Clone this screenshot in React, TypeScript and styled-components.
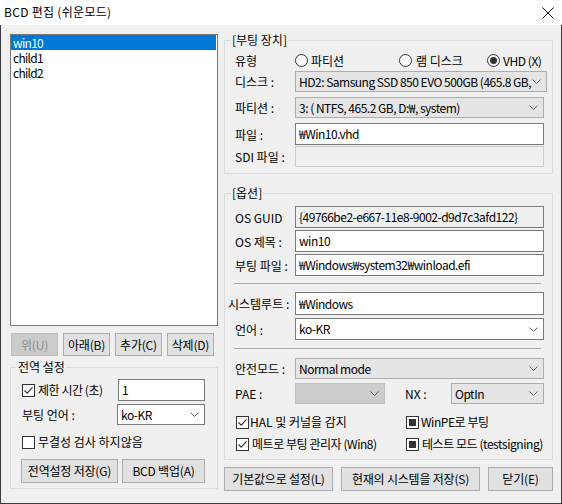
import React from 'react';
import styled, { createGlobalStyle } from 'styled-components';

const FONT = `"Noto Sans CJK KR", "Malgun Gothic", "Noto Sans", sans-serif`;

const GlobalStyle = createGlobalStyle`
  html, body { margin: 0; padding: 0; background: #ffffff; }
  body { font-family: ${FONT}; font-size: 12px; color: #000; }
  *, *::before, *::after { box-sizing: border-box; }
`;

const Window = styled.div`
  width: 562px;
  height: 504px;
  display: flex;
  flex-direction: column;
  background: #f0f0f0;
  overflow: hidden;
`;

const TitleBar = styled.div`
  flex: none;
  height: 25px;
  display: flex;
  align-items: center;
  justify-content: space-between;
  background: #ffffff;
  padding-left: 4px;
`;

const TitleText = styled.span`
  line-height: 16px;
  margin-top: -1px;
  letter-spacing: 0.3px;
`;

const CloseBox = styled.div`
  width: 28px;
  height: 25px;
  display: flex;
  align-items: center;
  justify-content: center;
`;

const Body = styled.div`
  flex: 1;
  min-height: 0;
  display: flex;
  gap: 6px;
  padding: 9px 8px 0 9px;
  border: 1px solid #3c3c3c;
  border-top: none;
`;

const LeftColumn = styled.div`
  width: 208px;
  flex: none;
  display: flex;
  flex-direction: column;
`;

const RightColumn = styled.div`
  width: 329px;
  flex: none;
  display: flex;
  flex-direction: column;
`;

const ListBox = styled.div`
  height: 292px;
  flex: none;
  border: 1px solid #7a7a7a;
  background: #ffffff;
  padding: 0 1px 0 0;
  display: flex;
  flex-direction: column;
`;

const ListItem = styled.div<{ $selected?: boolean }>`
  height: 15px;
  display: flex;
  align-items: center;
  line-height: 14px;
  padding-left: 2px;
  letter-spacing: -0.7px;
  background: ${(p) => (p.$selected ? '#0078d7' : 'transparent')};
  color: ${(p) => (p.$selected ? '#ffffff' : '#000000')};
  white-space: nowrap;
`;

const ButtonRow = styled.div<{ $mt: number; $gap: number; $ml?: number; $between?: boolean }>`
  display: flex;
  gap: ${(p) => p.$gap}px;
  margin-top: ${(p) => p.$mt}px;
  margin-left: ${(p) => p.$ml ?? 0}px;
  justify-content: ${(p) => (p.$between ? 'space-between' : 'flex-start')};
  flex: none;
`;

const Button = styled.button<{ $w: number; $h: number }>`
  width: ${(p) => p.$w}px;
  height: ${(p) => p.$h}px;
  padding: 0;
  margin: 0;
  border: 1px solid #adadad;
  background: #e1e1e1;
  color: #000000;
  font-family: ${FONT};
  font-size: 12px;
  line-height: 14px;
  letter-spacing: -0.2px;
  white-space: nowrap;
  &:disabled {
    background: #cccccc;
    border-color: #bfbfbf;
    color: #8c8c8c;
  }
`;

const Group = styled.div<{ $mt: number; $pl: number; $pr: number; $pb: number }>`
  position: relative;
  flex: none;
  margin-top: ${(p) => p.$mt}px;
  border: 1px solid #dcdcdc;
  padding: 0 ${(p) => p.$pr}px ${(p) => p.$pb}px ${(p) => p.$pl}px;
  display: flex;
  flex-direction: column;
`;

const GroupLabel = styled.span`
  position: absolute;
  top: -8px;
  left: 6px;
  padding: 0 1px;
  line-height: 14px;
  background: #f0f0f0;
  white-space: nowrap;
`;

const FieldRow = styled.div<{ $h: number; $mt: number; $labelW?: number }>`
  display: grid;
  grid-template-columns: ${(p) => p.$labelW ?? 60}px 1fr;
  align-items: stretch;
  height: ${(p) => p.$h}px;
  margin-top: ${(p) => p.$mt}px;
  flex: none;
`;

const Label = styled.span<{ $shift?: number }>`
  display: flex;
  align-items: center;
  margin-left: ${(p) => p.$shift ?? 0}px;
  white-space: nowrap;
  line-height: 14px;
  padding-top: 1px;
`;

type Tone = 'white' | 'readonly' | 'disabled';

const TextBox = styled.div<{ $tone?: Tone }>`
  display: flex;
  align-items: center;
  padding-left: 3px;
  border: 1px solid ${(p) => (p.$tone === 'disabled' ? '#cccccc' : '#7a7a7a')};
  background: ${(p) => (p.$tone === 'white' || !p.$tone ? '#ffffff' : '#f0f0f0')};
  white-space: nowrap;
  line-height: 14px;
  letter-spacing: -0.5px;
`;

const Combo = styled.div<{ $tone: 'white' | 'gray' | 'disabled' }>`
  display: flex;
  align-items: center;
  padding: 0 4px 0 2px;
  border: 1px solid
    ${(p) => (p.$tone === 'white' ? '#7a7a7a' : p.$tone === 'disabled' ? '#bfbfbf' : '#adadad')};
  background: ${(p) => (p.$tone === 'white' ? '#ffffff' : p.$tone === 'disabled' ? '#cccccc' : '#e5e5e5')};
  white-space: nowrap;
  line-height: 14px;
`;

const ComboText = styled.span`
  flex: 1;
  min-width: 0;
  padding-left: 1px;
  letter-spacing: -0.5px;
`;

const ChevronBox = styled.span`
  flex: none;
  width: 11px;
  display: flex;
  justify-content: center;
`;

const Separator = styled.div<{ $mt: number }>`
  height: 1px;
  flex: none;
  margin: ${(p) => p.$mt}px 3px 0 -1px;
  background: #a9a9a9;
`;

const RadioRow = styled.div`
  display: grid;
  grid-template-columns: 104px 88px auto;
  align-items: center;
`;

const Choice = styled.span<{ $gap: number; $tight?: boolean }>`
  display: flex;
  align-items: center;
  gap: ${(p) => p.$gap}px;
  white-space: nowrap;
  line-height: 14px;
  letter-spacing: ${(p) => (p.$tight ? '-0.45px' : '0')};
`;

const CheckRow = styled.div<{ $mt: number; $cols?: string; $ml?: number }>`
  display: grid;
  grid-template-columns: ${(p) => p.$cols ?? '1fr'};
  align-items: center;
  height: 14px;
  margin-top: ${(p) => p.$mt}px;
  margin-left: ${(p) => p.$ml ?? 0}px;
  flex: none;
`;

const Chevron = () => (
  <ChevronBox>
    <svg width="9" height="5" viewBox="0 0 9 5">
      <polyline points="0.5,0.5 4.5,4.5 8.5,0.5" fill="none" stroke="#606060" strokeWidth="1" />
    </svg>
  </ChevronBox>
);

const Radio = ({ checked }: { checked?: boolean }) => (
  <svg width="13" height="13" viewBox="0 0 13 13">
    <circle cx="6.5" cy="6.5" r="6" fill="#ffffff" stroke="#333333" strokeWidth="1" />
    {checked && <circle cx="6.5" cy="6.5" r="3.5" fill="#333333" />}
  </svg>
);

const CheckBox = ({ state }: { state: 'on' | 'off' | 'mixed' }) => (
  <svg width="13" height="13" viewBox="0 0 13 13">
    <rect x="0.5" y="0.5" width="12" height="12" fill="#ffffff" stroke="#333333" strokeWidth="1" />
    {state === 'on' && (
      <polyline points="2.5,6.5 5.2,9.2 10.5,3.3" fill="none" stroke="#333333" strokeWidth="1.2" />
    )}
    {state === 'mixed' && <rect x="3" y="3" width="7" height="7" fill="#333333" />}
  </svg>
);

const DropDown = ({ tone, text }: { tone: 'white' | 'gray' | 'disabled'; text: string }) => (
  <Combo $tone={tone}>
    <ComboText>{text}</ComboText>
    <Chevron />
  </Combo>
);

export default function App() {
  return (
    <>
      <GlobalStyle />
      <Window>
        <TitleBar>
          <TitleText>BCD 편집 (쉬운모드)</TitleText>
          <CloseBox>
            <svg width="12" height="12" viewBox="0 0 12 12">
              <path d="M0.5 0.5 L11.5 11.5 M11.5 0.5 L0.5 11.5" stroke="#111111" strokeWidth="1" />
            </svg>
          </CloseBox>
        </TitleBar>
        <Body>
          <LeftColumn>
            <ListBox>
              <ListItem $selected>win10</ListItem>
              <ListItem>child1</ListItem>
              <ListItem>child2</ListItem>
            </ListBox>
            <ButtonRow $mt={7} $gap={5} $ml={1}>
              <Button $w={47} $h={23} disabled>
                위(U)
              </Button>
              <Button $w={47} $h={23}>아래(B)</Button>
              <Button $w={47} $h={23}>추가(C)</Button>
              <Button $w={47} $h={23}>삭제(D)</Button>
            </ButtonRow>
            <Group $mt={11} $pl={11} $pr={12} $pb={5}>
              <GroupLabel>전역 설정</GroupLabel>
              <FieldRow $h={22} $mt={11} $labelW={96}>
                <Choice $gap={3} $tight>
                  <CheckBox state="on" />
                  제한 시간 (초)
                </Choice>
                <TextBox $tone="white">1</TextBox>
              </FieldRow>
              <FieldRow $h={21} $mt={3} $labelW={95}>
                <Label>부팅 언어 :</Label>
                <DropDown tone="white" text="ko-KR" />
              </FieldRow>
              <CheckRow $mt={10}>
                <Choice $gap={3}>
                  <CheckBox state="off" />
                  무결성 검사 하지않음
                </Choice>
              </CheckRow>
              <ButtonRow $mt={10} $gap={4} $ml={-1}>
                <Button $w={97} $h={24}>전역설정 저장(G)</Button>
                <Button $w={83} $h={24}>BCD 백업(A)</Button>
              </ButtonRow>
            </Group>
          </LeftColumn>

          <RightColumn>
            <Group $mt={6} $pl={10} $pr={8} $pb={6}>
              <GroupLabel>[부팅 장치]</GroupLabel>
              <FieldRow $h={14} $mt={12}>
                <Label>유형</Label>
                <RadioRow>
                  <Choice $gap={3}>
                    <Radio />
                    파티션
                  </Choice>
                  <Choice $gap={4}>
                    <Radio />
                    램 디스크
                  </Choice>
                  <Choice $gap={3} $tight>
                    <Radio checked />
                    VHD (X)
                  </Choice>
                </RadioRow>
              </FieldRow>
              <FieldRow $h={21} $mt={4}>
                <Label>디스크 :</Label>
                <DropDown tone="gray" text="HD2: Samsung SSD 850 EVO 500GB (465.8 GB," />
              </FieldRow>
              <FieldRow $h={21} $mt={5}>
                <Label>파티션 :</Label>
                <DropDown tone="gray" text="3: ( NTFS, 465.2 GB, D:₩, system)" />
              </FieldRow>
              <FieldRow $h={22} $mt={5}>
                <Label>파일 :</Label>
                <TextBox $tone="white">₩Win10.vhd</TextBox>
              </FieldRow>
              <FieldRow $h={21} $mt={1}>
                <Label>SDI 파일 :</Label>
                <TextBox $tone="disabled" />
              </FieldRow>
            </Group>

            <Group $mt={19} $pl={10} $pr={8} $pb={8}>
              <GroupLabel>[옵션]</GroupLabel>
              <FieldRow $h={22} $mt={12}>
                <Label>OS GUID</Label>
                <TextBox $tone="readonly">{'{49766be2-e667-11e8-9002-d9d7c3afd122}'}</TextBox>
              </FieldRow>
              <FieldRow $h={22} $mt={2}>
                <Label>OS 제목 :</Label>
                <TextBox $tone="white">win10</TextBox>
              </FieldRow>
              <FieldRow $h={22} $mt={2}>
                <Label>부팅 파일 :</Label>
                <TextBox $tone="white">₩Windows₩system32₩winload.efi</TextBox>
              </FieldRow>
              <Separator $mt={7} />
              <FieldRow $h={23} $mt={8}>
                <Label $shift={-7}>시스템루트 :</Label>
                <TextBox $tone="white">₩Windows</TextBox>
              </FieldRow>
              <FieldRow $h={22} $mt={3}>
                <Label>언어 :</Label>
                <DropDown tone="white" text="ko-KR" />
              </FieldRow>
              <Separator $mt={8} />
              <FieldRow $h={21} $mt={9}>
                <Label>안전모드 :</Label>
                <DropDown tone="gray" text="Normal mode" />
              </FieldRow>
              <FieldRow $h={21} $mt={4}>
                <Label>PAE :</Label>
                <FieldRow $h={21} $mt={0} $labelW={90} as="div">
                  <DropDown tone="disabled" text="" />
                  <FieldRow $h={21} $mt={0} $labelW={66} as="div">
                    <Label $shift={20}>NX :</Label>
                    <DropDown tone="gray" text="OptIn" />
                  </FieldRow>
                </FieldRow>
              </FieldRow>
              <CheckRow $mt={11} $cols="170px 1fr" $ml={1}>
                <Choice $gap={1}>
                  <CheckBox state="on" />
                  HAL 및 커널을 감지
                </Choice>
                <Choice $gap={2} $tight>
                  <CheckBox state="mixed" />
                  WinPE로 부팅
                </Choice>
              </CheckRow>
              <CheckRow $mt={8} $cols="170px 1fr" $ml={1}>
                <Choice $gap={3} $tight>
                  <CheckBox state="on" />
                  메트로 부팅 관리자 (Win8)
                </Choice>
                <Choice $gap={3} $tight>
                  <CheckBox state="mixed" />
                  테스트 모드 (testsigning)
                </Choice>
              </CheckRow>
            </Group>

            <ButtonRow $mt={7} $gap={8} $between>
              <Button $w={109} $h={24}>기본값으로 설정(L)</Button>
              <Button $w={139} $h={24}>현재의 시스템을 저장(S)</Button>
              <Button $w={65} $h={24}>닫기(E)</Button>
            </ButtonRow>
          </RightColumn>
        </Body>
      </Window>
    </>
  );
}
